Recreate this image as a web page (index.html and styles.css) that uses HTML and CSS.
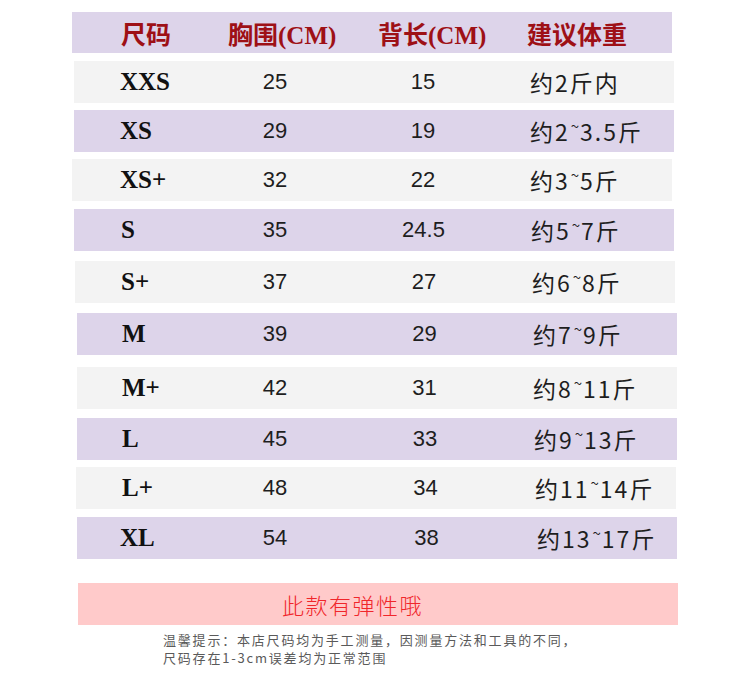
FILE: index.html
```html
<!DOCTYPE html>
<html lang="zh">
<head>
<meta charset="utf-8">
<title>尺码表</title>
<link rel="stylesheet" href="styles.css">
</head>
<body>
<div class="chart">
  <div class="head">
    <div>尺码</div>
    <div>胸围(CM)</div>
    <div>背长(CM)</div>
    <div>建议体重</div>
  </div>
  <div class="row gray r1"><div class="sz">XXS</div><div class="num">25</div><div class="num">15</div><div class="wt">约2斤内</div></div>
  <div class="row lav r2"><div class="sz">XS</div><div class="num">29</div><div class="num">19</div><div class="wt">约2<span class="tl">~</span>3.5斤</div></div>
  <div class="row gray r3"><div class="sz">XS+</div><div class="num">32</div><div class="num">22</div><div class="wt">约3<span class="tl">~</span>5斤</div></div>
  <div class="row lav r4"><div class="sz">S</div><div class="num">35</div><div class="num">24.5</div><div class="wt">约5<span class="tl">~</span>7斤</div></div>
  <div class="row gray r5"><div class="sz">S+</div><div class="num">37</div><div class="num">27</div><div class="wt">约6<span class="tl">~</span>8斤</div></div>
  <div class="row lav r6"><div class="sz">M</div><div class="num">39</div><div class="num">29</div><div class="wt">约7<span class="tl">~</span>9斤</div></div>
  <div class="row gray r7"><div class="sz">M+</div><div class="num">42</div><div class="num">31</div><div class="wt">约8<span class="tl">~</span>11斤</div></div>
  <div class="row lav r8"><div class="sz">L</div><div class="num">45</div><div class="num">33</div><div class="wt">约9<span class="tl">~</span>13斤</div></div>
  <div class="row gray r9"><div class="sz">L+</div><div class="num">48</div><div class="num">34</div><div class="wt">约11<span class="tl">~</span>14斤</div></div>
  <div class="row lav r10"><div class="sz">XL</div><div class="num">54</div><div class="num">38</div><div class="wt wt-xl">约13<span class="tl">~</span>17斤</div></div>
  <div class="note">此款有弹性哦</div>
  <p class="tip">温馨提示：本店尺码均为手工测量，因测量方法和工具的不同，<br>尺码存在1-3cm误差均为正常范围</p>
</div>
</body>
</html>
```

FILE: styles.css
```css
html, body {
  margin: 0;
  padding: 0;
  background: #ffffff;
}

.chart {
  width: 750px;
  padding-top: 12px;
  display: flex;
  flex-direction: column;
  align-items: flex-start;
}

.head {
  margin-left: 72px;
  width: 600px;
  height: 41px;
  box-sizing: border-box;
  padding-left: 49px;
  background: #ddd4ea;
  display: grid;
  grid-template-columns: 107px 150px 149px 1fr;
  align-items: center;
  font-family: "Liberation Serif", "Noto Sans CJK SC", serif;
  font-weight: bold;
  font-size: 25px;
  color: #9e1016;
  white-space: nowrap;
}

.row {
  width: 600px;
  height: 42px;
  box-sizing: border-box;
  display: grid;
  align-items: center;
  color: #1e1e1e;
  white-space: nowrap;
}

.lav { background: #ddd4ea; }
.gray { background: #f3f3f3; }

/* per-row offsets; column template keeps numbers aligned on the page */
.r1 { margin: 8px 0 0 74px; padding-left: 46px; grid-template-columns: 114px 82px 214px 1fr; }
.r2 { margin: 7px 0 0 74px; padding-left: 46px; grid-template-columns: 114px 82px 214px 1fr; }
.r3 { margin: 7px 0 0 72px; padding-left: 48px; grid-template-columns: 114px 82px 214px 1fr; }
.r4 { margin: 8px 0 0 74px; padding-left: 47px; grid-template-columns: 113px 82px 215px 1fr; }
.r5 { margin: 10px 0 0 75px; padding-left: 46px; grid-template-columns: 113px 82px 216px 1fr; }
.r6 { margin: 10px 0 0 77px; padding-left: 45px; grid-template-columns: 112px 82px 217px 1fr; }
.r7 { margin: 12px 0 0 77px; padding-left: 45px; grid-template-columns: 112px 82px 217px 1fr; }
.r8 { margin: 9px 0 0 77px; padding-left: 45px; grid-template-columns: 112px 82px 218px 1fr; }
.r9 { margin: 7px 0 0 76px; padding-left: 46px; grid-template-columns: 112px 82px 219px 1fr; }
.r10 { margin: 8px 0 0 77px; padding-left: 43px; grid-template-columns: 114px 82px 221px 1fr; }

.sz {
  font-family: "Liberation Serif", serif;
  font-weight: bold;
  font-size: 25px;
  color: #111;
}

.num {
  text-align: center;
  font-family: "Liberation Sans", sans-serif;
  font-size: 22px;
}

.wt {
  font-family: "Noto Sans CJK SC", sans-serif;
  font-size: 23px;
  letter-spacing: 2px;
  line-height: 1;
}

.wt-xl { padding-left: 0; }

.tl {
  display: inline-block;
  position: relative;
  top: -9px;
  font-size: 15px;
  letter-spacing: 0;
  margin: 0 1px;
}

.note {
  margin: 24px 0 0 78px;
  width: 600px;
  height: 42px;
  box-sizing: border-box;
  padding-left: 204px;
  background: #ffcaca;
  display: flex;
  align-items: center;
  font-family: "Noto Sans CJK SC", sans-serif;
  font-weight: 300;
  font-size: 22px;
  letter-spacing: 1.5px;
  color: #f0262b;
}

.tip {
  margin: 6px 0 0 163px;
  font-family: "Noto Sans CJK SC", sans-serif;
  font-size: 13px;
  line-height: 18px;
  letter-spacing: 1.8px;
  color: #5a5a5a;
}
```
